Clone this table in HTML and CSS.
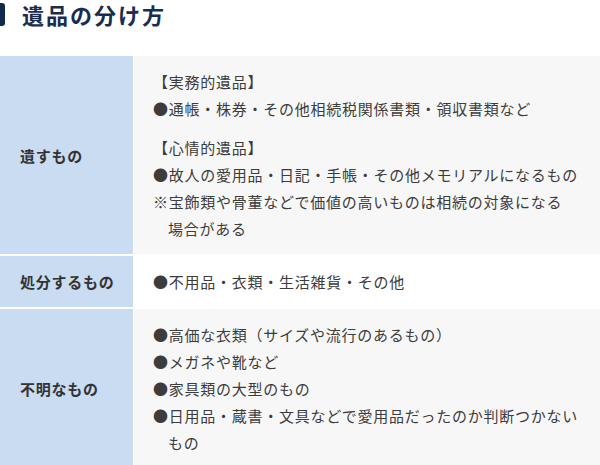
FILE: index.html
```html
<!DOCTYPE html>
<html lang="ja">
<head>
<meta charset="utf-8">
<link rel="stylesheet" href="styles.css">
</head>
<body>
<div class="heading">
  <span class="heading-bar"></span>
  <h2 class="heading-title">遺品の分け方</h2>
</div>
<div class="table">
  <div class="label">遺すもの</div>
  <div class="cell cell-grey">
    <div class="group">
      <p class="line">【実務的遺品】</p>
      <p class="line hang">●通帳・株券・その他相続税関係書類・領収書類など</p>
    </div>
    <div class="group group-next">
      <p class="line">【心情的遺品】</p>
      <p class="line hang">●故人の愛用品・日記・手帳・その他メモリアルになるもの</p>
      <p class="line hang">※宝飾類や骨董などで価値の高いものは相続の対象になる<br>場合がある</p>
    </div>
  </div>

  <div class="label">処分するもの</div>
  <div class="cell cell-white">
    <p class="line hang">●不用品・衣類・生活雑貨・その他</p>
  </div>

  <div class="label">不明なもの</div>
  <div class="cell cell-grey">
    <p class="line hang">●高価な衣類（サイズや流行のあるもの）</p>
    <p class="line hang">●メガネや靴など</p>
    <p class="line hang">●家具類の大型のもの</p>
    <p class="line hang">●日用品・蔵書・文具などで愛用品だったのか判断つかない<br>もの</p>
  </div>
</div>
</body>
</html>
```
FILE: styles.css
```css
html, body {
  margin: 0;
  padding: 0;
  background: #ffffff;
}

body {
  font-family: "Noto Sans CJK JP", "Noto Sans", sans-serif;
  color: #3a3a3a;
  width: 600px;
  overflow: hidden;
}

.heading {
  display: flex;
  align-items: center;
  gap: 17px;
  height: 26px;
  padding-top: 1px;
  margin-bottom: 29px;
}

.heading-bar {
  display: block;
  width: 5px;
  height: 23px;
  border-radius: 0 3px 3px 0;
  background: #102a4e;
}

.heading-title {
  margin: 0;
  font-size: 22px;
  line-height: 26px;
  font-weight: 700;
  letter-spacing: 0.09em;
  color: #1a2d50;
}

.table {
  display: grid;
  grid-template-columns: 133px 1fr;
  column-gap: 1px;
  row-gap: 2px;
  background: #ffffff;
}

.label {
  display: flex;
  align-items: center;
  padding-left: 20px;
  background: #c9dcf2;
  font-size: 15px;
  font-weight: 700;
  letter-spacing: 0.05em;
  color: #333333;
}

.cell {
  padding: 12px 12px 12px 19px;
  font-size: 15px;
  letter-spacing: 0.05em;
  color: #3c3c3c;
}

.cell-grey {
  background: #f7f7f7;
}

.cell-white {
  background: #ffffff;
}

.line {
  margin: 0;
  line-height: 27px;
}

.hang {
  padding-left: 1em;
  text-indent: -1em;
}

.group-next {
  margin-top: 12px;
}
```
